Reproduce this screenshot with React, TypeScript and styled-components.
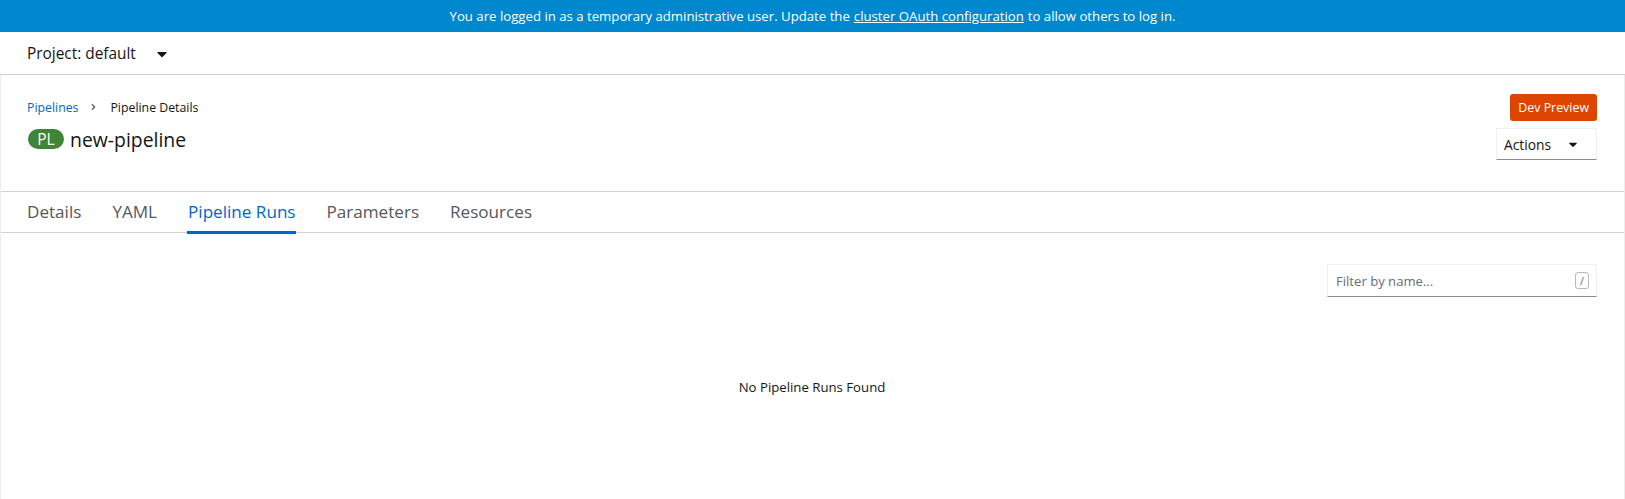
import React from "react";
import styled, { createGlobalStyle } from "styled-components";

const GlobalStyle = createGlobalStyle`
  html, body { margin: 0; padding: 0; background: #fff; }
  body {
    font-family: "Open Sans", "Noto Sans", sans-serif;
    color: #151515;
    -webkit-font-smoothing: antialiased;
  }
  * { box-sizing: border-box; }
`;

const Page = styled.div`
  min-height: 100vh;
  display: flex;
  flex-direction: column;
`;

const Banner = styled.div`
  height: 32px;
  background: #0088ce;
  color: #fff;
  font-size: 13.2px;
  display: flex;
  align-items: center;
  justify-content: center;
  white-space: nowrap;
`;

const BannerLink = styled.a`
  color: #fff;
  text-decoration: underline;
  margin: 0 4px;
`;

const ProjectBar = styled.div`
  height: 43px;
  border-bottom: 1px solid #d2d2d2;
  display: flex;
  align-items: center;
  padding-left: 27px;
  font-size: 15.4px;
  color: #151515;
`;

const ProjectCaret = styled.span`
  display: inline-flex;
  margin-left: 21px;
  margin-top: 1px;
`;

const Content = styled.div`
  flex: 1;
  display: flex;
  flex-direction: column;
  border-left: 1px solid #ededed;
  border-right: 1px solid #ededed;
`;

const Header = styled.div`
  height: 116px;
  display: flex;
  justify-content: space-between;
  align-items: flex-start;
  padding: 19px 27px 0 26px;
`;

const HeaderLeft = styled.div`
  display: flex;
  flex-direction: column;
`;

const Breadcrumb = styled.nav`
  display: flex;
  align-items: center;
  height: 18px;
  margin-top: 4px;
  font-size: 12.3px;
`;

const CrumbLink = styled.a`
  color: #0066cc;
  text-decoration: none;
`;

const CrumbSep = styled.span`
  display: inline-flex;
  margin: 0 14px 0 13px;
  color: #6a6e73;
`;

const CrumbCurrent = styled.span`
  color: #151515;
`;

const TitleRow = styled.h1`
  display: flex;
  align-items: center;
  margin: 9px 0 0 0;
  height: 28px;
  font-weight: 400;
  font-size: 19.4px;
  color: #151515;
`;

const KindBadge = styled.span`
  display: inline-flex;
  align-items: center;
  justify-content: center;
  width: 36px;
  height: 20px;
  border-radius: 10px;
  background: #3e8635;
  color: #fff;
  font-size: 15.5px;
  margin-right: 6px;
  margin-left: 1px;
`;

const HeaderRight = styled.div`
  display: flex;
  flex-direction: column;
  align-items: flex-end;
  gap: 7px;
`;

const PreviewBadge = styled.span`
  display: inline-flex;
  align-items: center;
  height: 27px;
  padding: 0 8px;
  border-radius: 3px;
  background: #dc4600;
  color: #fff;
  font-size: 12.4px;
`;

const DropdownToggle = styled.button`
  display: flex;
  align-items: center;
  justify-content: space-between;
  width: 101px;
  height: 32px;
  padding: 0 19px 0 7px;
  background: #fff;
  border: 1px solid #f0f0f0;
  border-bottom-color: #8a8d90;
  font-family: inherit;
  font-size: 13.8px;
  color: #151515;
  cursor: pointer;
`;

const Tabs = styled.div`
  display: flex;
  height: 42px;
  border-top: 1px solid #d2d2d2;
  border-bottom: 1px solid #d2d2d2;
  padding-left: 26px;
`;

const Tab = styled.div<{ $active?: boolean }>`
  position: relative;
  display: flex;
  align-items: center;
  margin-right: 31px;
  padding-bottom: 1px;
  font-size: 17.1px;
  color: ${(p) => (p.$active ? "#0066cc" : "#55585c")};
  cursor: pointer;
  &::after {
    content: "";
    position: absolute;
    left: -1px;
    right: 0;
    bottom: -2px;
    height: 3px;
    background: ${(p) => (p.$active ? "#0066cc" : "transparent")};
  }
`;

const Body = styled.div`
  display: flex;
  flex-direction: column;
  padding: 31px 27px 0 26px;
`;

const FilterRow = styled.div`
  display: flex;
  justify-content: flex-end;
`;

const FilterBox = styled.div`
  display: flex;
  align-items: center;
  width: 270px;
  height: 33px;
  border: 1px solid #f0f0f0;
  border-bottom-color: #8a8d90;
  padding: 0 7px 0 8px;
`;

const FilterInput = styled.input`
  flex: 1;
  border: none;
  outline: none;
  font-family: inherit;
  font-size: 13.1px;
  color: #151515;
  padding: 0;
  &::placeholder {
    color: #6a6e73;
  }
`;

const Kbd = styled.kbd`
  display: inline-flex;
  align-items: center;
  justify-content: center;
  width: 14px;
  height: 17px;
  border: 1px solid #b8bbbe;
  border-radius: 3px;
  font-family: "Open Sans", sans-serif;
  font-size: 11px;
  color: #6a6e73;
`;

const Empty = styled.div`
  margin-top: 80px;
  text-align: center;
  font-size: 13.2px;
  line-height: 20px;
  color: #151515;
`;

const CaretDown = ({ w = 9 }: { w?: number }) => (
  <svg width={w} height={w * 1.6} viewBox="0 0 320 512" fill="#151515">
    <path d="M31.3 192h257.3c17.8 0 26.7 21.5 14.1 34.1L174.1 354.8c-7.8 7.8-20.5 7.8-28.3 0L17.2 226.1C4.6 213.5 13.5 192 31.3 192z" />
  </svg>
);

const AngleRight = () => (
  <svg width="5" height="10" viewBox="0 0 256 512" fill="#6a6e73">
    <path d="M224.3 273l-136 136c-9.4 9.4-24.6 9.4-33.9 0l-22.6-22.6c-9.4-9.4-9.4-24.6 0-33.9l96.4-96.4-96.4-96.4c-9.4-9.4-9.4-24.6 0-33.9L54.3 103c9.4-9.4 24.6-9.4 33.9 0l136 136c9.5 9.4 9.5 24.6.1 34z" />
  </svg>
);

const tabs = ["Details", "YAML", "Pipeline Runs", "Parameters", "Resources"];

export default function App() {
  return (
    <>
      <GlobalStyle />
      <Page>
        <Banner>
          You are logged in as a temporary administrative user. Update the
          <BannerLink href="#">cluster OAuth configuration</BannerLink>
          to allow others to log in.
        </Banner>
        <ProjectBar>
          Project: default
          <ProjectCaret>
            <CaretDown w={10} />
          </ProjectCaret>
        </ProjectBar>
        <Content>
          <Header>
            <HeaderLeft>
              <Breadcrumb>
                <CrumbLink href="#">Pipelines</CrumbLink>
                <CrumbSep>
                  <AngleRight />
                </CrumbSep>
                <CrumbCurrent>Pipeline Details</CrumbCurrent>
              </Breadcrumb>
              <TitleRow>
                <KindBadge>PL</KindBadge>
                new-pipeline
              </TitleRow>
            </HeaderLeft>
            <HeaderRight>
              <PreviewBadge>Dev Preview</PreviewBadge>
              <DropdownToggle>
                Actions
                <CaretDown w={8} />
              </DropdownToggle>
            </HeaderRight>
          </Header>
          <Tabs>
            {tabs.map((t) => (
              <Tab key={t} $active={t === "Pipeline Runs"}>
                {t}
              </Tab>
            ))}
          </Tabs>
          <Body>
            <FilterRow>
              <FilterBox>
                <FilterInput placeholder="Filter by name..." />
                <Kbd>/</Kbd>
              </FilterBox>
            </FilterRow>
            <Empty>No Pipeline Runs Found</Empty>
          </Body>
        </Content>
      </Page>
    </>
  );
}
